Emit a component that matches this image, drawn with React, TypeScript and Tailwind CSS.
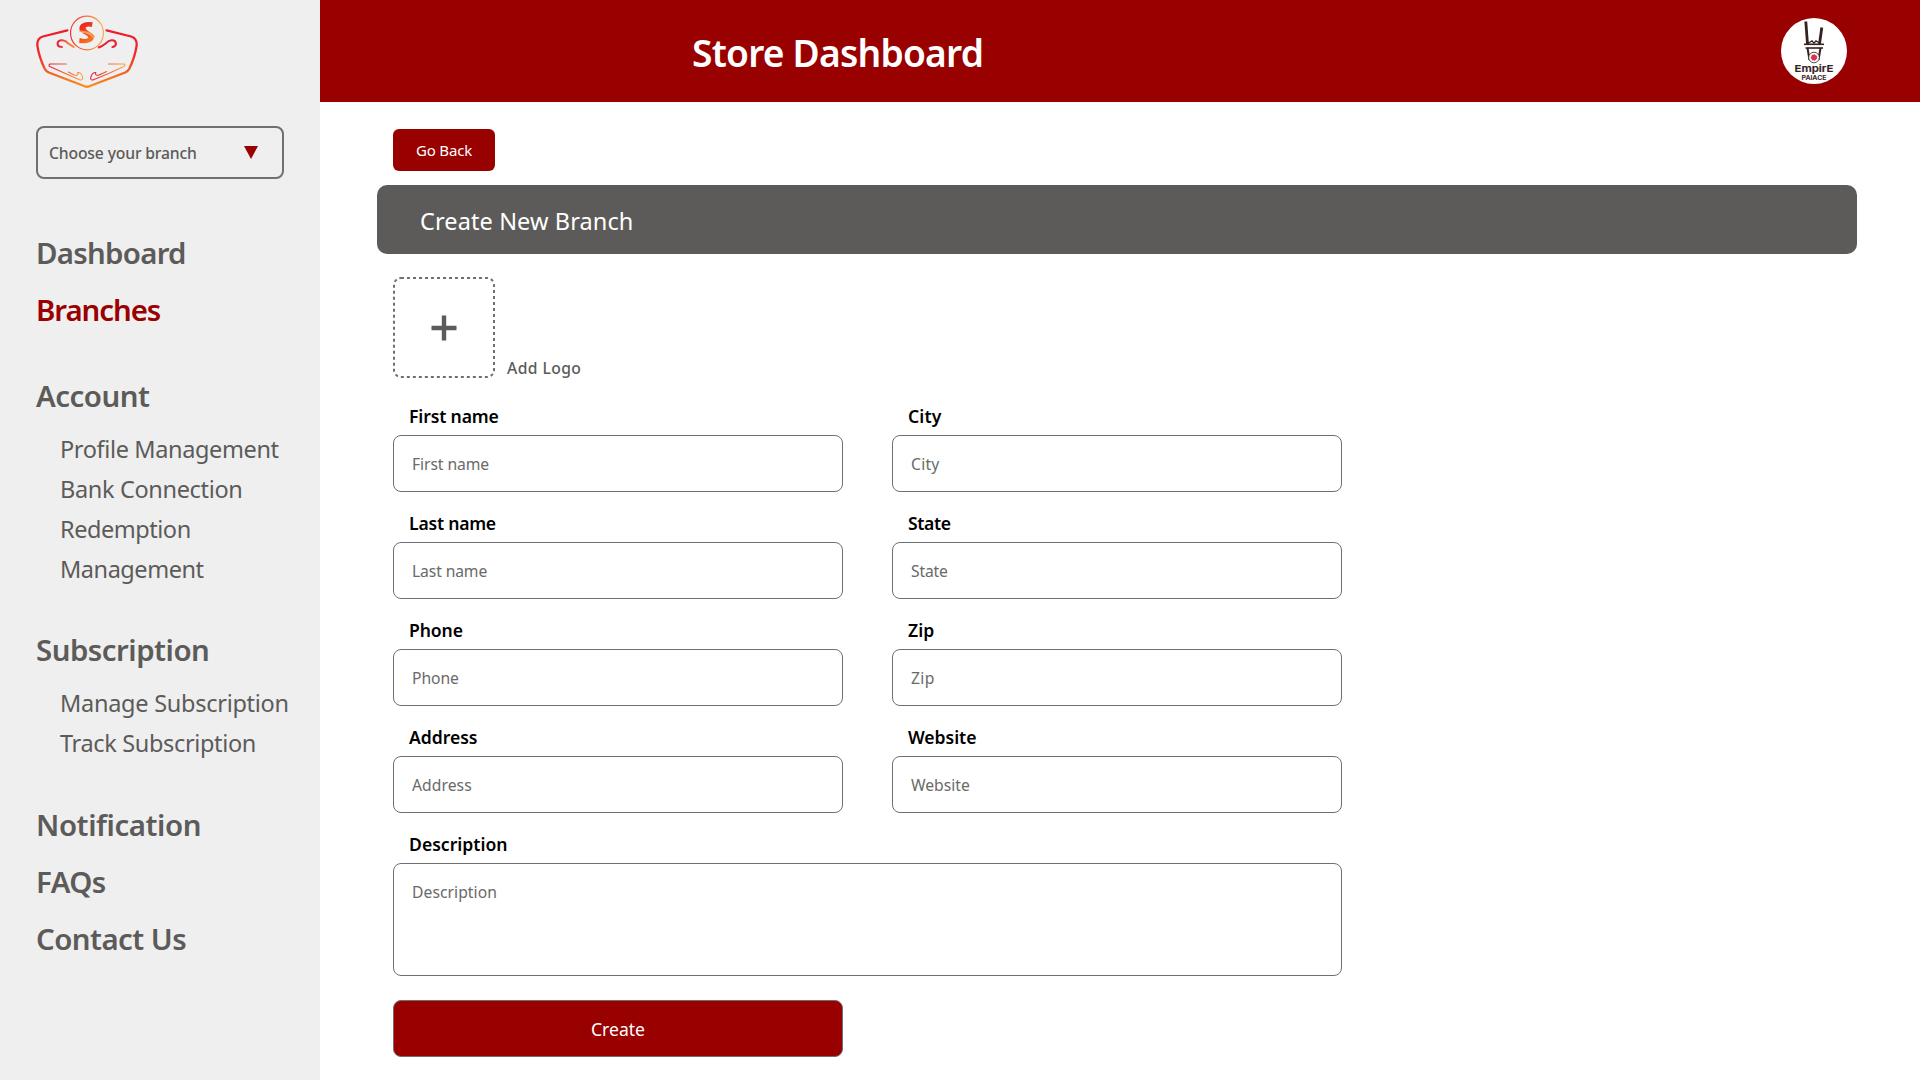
import { ReactNode } from "react";

function BrandLogo() {
  return (
    <svg width="102" height="74" viewBox="0 0 104 74" preserveAspectRatio="none" fill="none" strokeLinecap="round" strokeLinejoin="round">
      <defs>
        <linearGradient id="shield" x1="0" y1="14" x2="0" y2="73" gradientUnits="userSpaceOnUse">
          <stop offset="0" stopColor="#ed1b2c" />
          <stop offset="0.45" stopColor="#ef2b2a" />
          <stop offset="1" stopColor="#f7921e" />
        </linearGradient>
        <linearGradient id="ring" x1="34" y1="0" x2="70" y2="0" gradientUnits="userSpaceOnUse">
          <stop offset="0" stopColor="#ef2b35" />
          <stop offset="0.6" stopColor="#f7803a" />
          <stop offset="1" stopColor="#fbaf45" />
        </linearGradient>
        <linearGradient id="letter" x1="46" y1="8" x2="58" y2="28" gradientUnits="userSpaceOnUse">
          <stop offset="0" stopColor="#e8211f" />
          <stop offset="0.6" stopColor="#f2551f" />
          <stop offset="1" stopColor="#f78a1e" />
        </linearGradient>
        <linearGradient id="curl" x1="22" y1="0" x2="40" y2="0" gradientUnits="userSpaceOnUse">
          <stop offset="0" stopColor="#e8203a" />
          <stop offset="1" stopColor="#fba63c" />
        </linearGradient>
        <linearGradient id="flourishLeft" x1="14" y1="0" x2="48" y2="0" gradientUnits="userSpaceOnUse">
          <stop offset="0" stopColor="#e8203a" />
          <stop offset="1" stopColor="#fba63c" />
        </linearGradient>
        <linearGradient id="flourishRight" x1="56" y1="0" x2="90" y2="0" gradientUnits="userSpaceOnUse">
          <stop offset="0" stopColor="#e8203a" />
          <stop offset="1" stopColor="#fba63c" />
        </linearGradient>
      </defs>
      <path d="M32 15.300 L7 21.500 Q1 23.500 1.300 30 Q3 42 9 54 Q10 56 13 57.500 L49 71 Q52 72.500 55 71 L91 57.500 Q94 56 95 54 Q101 42 102.700 30 Q103 23.500 97 21.500 L72 15.300" stroke="url(#shield)" strokeWidth="2.300" />
      <circle cx="52" cy="18" r="16.800" stroke="url(#ring)" strokeWidth="1.200" />
      <path d="M57.800 7.200 L57 12 Q51 10.500 50.500 13 Q51 15 54.500 17 Q60 20 58.500 24.500 Q56 29 44 28 L44.500 23 Q52 25 53.500 22.500 Q53 20.500 49 19 Q43 16.500 44.500 11.500 Q47 6 57.800 7.200 Z" fill="url(#letter)" />
      <path d="M44.300 16 Q50 16 54 17.800 Q58.500 19 59.500 22" stroke="#f9a04a" strokeWidth="1.200" />
      <path d="M45 17.300 Q50 17 54 19 Q57 20 57.500 22" stroke="#fdebd8" strokeWidth="0.600" />
      <path d="M26.500 32 Q22 32 22 28.500 Q22.500 25 27 25.300 Q30 25.600 33 28.500 Q36 30.500 38.500 32" stroke="url(#curl)" strokeWidth="2.100" />
      <path d="M78 32 Q81.500 31.500 81.500 28.500 Q81 25 77 25.300 Q74 25.600 71 28.500 Q68 31 64 32.500" stroke="#e8203a" strokeWidth="2.100" />
      <path d="M31 49 H14 Q12.500 50.500 14 51.500 L30 58.500 L45 65 Q48 65.500 47.500 62 Q46 57 42.500 57.500 Q43.500 60 41 60.500 Q37 59.500 33 57" stroke="url(#flourishLeft)" strokeWidth="1.100" />
      <path d="M74 49 H90 Q91.500 50.500 89.500 51.500 L74 58.500 L58 65 Q55 65.500 56 62 Q57.500 57 61 57.500 Q60 60 62.500 60.500 Q66 59.500 72 56.500" stroke="url(#flourishRight)" strokeWidth="1.100" />
    </svg>
  );
}

function StoreAvatar() {
  return (
    <svg width="66" height="66" viewBox="0 0 66 66" fill="none" stroke="#35211f">
      <circle cx="33" cy="33" r="33" fill="#fff" stroke="none" />
      <path d="M24.800 3.500 L26.500 26" strokeWidth="2.800" />
      <path d="M40.800 9.500 L38.500 26" strokeWidth="2.800" />
      <path d="M27 25.500 L31 22.800 L33 25.200 L35 22.800 L39 25.500" strokeWidth="1.300" />
      <path d="M23 26.300 H43" strokeWidth="1.600" />
      <path d="M24.500 30 H42" strokeWidth="1.600" />
      <path d="M26.500 30 L28.500 42 M39.500 30 L37.500 42" strokeWidth="2" />
      <circle cx="33" cy="39.500" r="5.300" fill="#fff" strokeWidth="0.800" />
      <circle cx="33" cy="39.500" r="2.800" fill="#d8344c" stroke="#c8304c" strokeWidth="1" strokeDasharray="1.500 1" />
      <g fill="#35211f" fontFamily="Inter, sans-serif">
        <text x="13.500" y="54" fontSize="9.600" fontWeight="600" strokeWidth="0.200" textLength="39" lengthAdjust="spacingAndGlyphs">EmpirE</text>
        <text x="20.500" y="61.500" fontSize="6.800" fontWeight="600" strokeWidth="0.100" textLength="25" lengthAdjust="spacingAndGlyphs">PAlACE</text>
      </g>
    </svg>
  );
}

function NavItem({ children, className }: { children: ReactNode; className: string }) {
  return <a className={`block h-[57px] text-[29.4px] leading-[59px] font-semibold whitespace-nowrap ${className}`}>{children}</a>;
}

function SubItem({ children, className }: { children: ReactNode; className: string }) {
  return <a className={`block text-[23.5px] leading-10 ${className}`}>{children}</a>;
}

type FieldProps = { name: string; labelClass: string; inputClass: string };

const inputStyle =
  "block w-full rounded-lg border border-[#707070] bg-white pl-[18px] text-[15.7px] placeholder:text-[#6a6a68] placeholder:opacity-100 outline-none";
const labelStyle = "block h-[33px] pl-4 text-[17.6px] leading-[29px] font-semibold text-black";

function Field({ name, labelClass, inputClass }: FieldProps) {
  return (
    <label className="block">
      <span className={`${labelStyle} ${labelClass}`}>{name}</span>
      <input className={`h-[57px] pt-px ${inputStyle} ${inputClass}`} placeholder={name} />
    </label>
  );
}

const fields: FieldProps[] = [
  { name: "First name", labelClass: "tracking-[-0.15px]", inputClass: "tracking-[-0.08px]" },
  { name: "City", labelClass: "tracking-[0.1px]", inputClass: "tracking-[0.23px]" },
  { name: "Last name", labelClass: "tracking-[-0.23px]", inputClass: "tracking-[-0.13px]" },
  { name: "State", labelClass: "tracking-[-0.4px]", inputClass: "tracking-[-0.2px]" },
  { name: "Phone", labelClass: "tracking-[-0.1px]", inputClass: "tracking-[-0.1px]" },
  { name: "Zip", labelClass: "tracking-[0.08px]", inputClass: "tracking-[0.4px]" },
  { name: "Address", labelClass: "tracking-[-0.05px]", inputClass: "tracking-[0.05px]" },
  { name: "Website", labelClass: "tracking-[-0.05px]", inputClass: "tracking-[0px]" },
];

export default function App() {
  return (
    <div className="flex h-[1080px] w-[1920px] overflow-hidden bg-white font-['Noto_Sans',sans-serif] text-[#5c5b59]">
      <aside className="w-80 shrink-0 bg-[#efefef] pt-[15px] pl-9">
        <BrandLogo />
        <button className="mt-[37px] flex h-[53px] w-[248px] items-center justify-between rounded-lg border-2 border-[#707070] pr-6 pl-[11px]">
          <span className="pt-0.5 text-[15.7px] font-medium tracking-[-0.15px]">Choose your branch</span>
          <svg width="14" height="13" viewBox="0 0 14 13">
            <path d="M0 0 H14 L7 13 Z" fill="#990000" />
          </svg>
        </button>
        <nav className="mt-[45px]">
          <NavItem className="tracking-[-0.72px]">Dashboard</NavItem>
          <NavItem className="tracking-[-1.05px] text-[#990000]">Branches</NavItem>
          <div className="mt-[29px]">
            <NavItem className="tracking-[-0.5px]">Account</NavItem>
            <div className="mt-[5px] pl-6">
              <SubItem className="tracking-[-0.37px]">Profile Management</SubItem>
              <SubItem className="tracking-[-0.34px]">Bank Connection</SubItem>
              <SubItem className="tracking-[-0.46px]">Redemption Management</SubItem>
            </div>
          </div>
          <div className="mt-8">
            <NavItem className="tracking-[-0.49px]">Subscription</NavItem>
            <div className="mt-[5px] pl-6">
              <SubItem className="tracking-[-0.27px]">Manage Subscription</SubItem>
              <SubItem className="tracking-[-0.34px]">Track Subscription</SubItem>
            </div>
          </div>
          <div className="mt-[33px]">
            <NavItem className="tracking-[-0.41px]">Notification</NavItem>
            <NavItem className="tracking-[-0.55px]">FAQs</NavItem>
            <NavItem className="tracking-[-0.54px]">Contact Us</NavItem>
          </div>
        </nav>
      </aside>

      <div className="flex-1">
        <header className="flex h-[102px] items-center justify-between bg-[#990000] pr-[73px] pl-[372px]">
          <h1 className="pt-1 text-[37.2px] leading-[50px] font-semibold tracking-[-0.79px] text-white">Store Dashboard</h1>
          <StoreAvatar />
        </header>

        <main className="pt-[27px] pl-[57px]">
          <button className="ml-4 block h-[42px] w-[102px] rounded-md bg-[#990000] text-[15px] tracking-[-0.15px] text-white">
            Go Back
          </button>
          <h2 className="mt-[14px] h-[69px] w-[1480px] rounded-[10px] bg-[#5c5b59] pl-[43px] text-[23.5px] leading-[73px] tracking-[0.11px] text-white">
            Create New Branch
          </h2>

          <form className="mt-[23px] ml-4 w-[949px]">
            <div className="flex items-end gap-3">
              <svg width="102" height="101" viewBox="0 0 102 101" fill="none">
                <rect x="1" y="1" width="100" height="99" rx="7" stroke="#707070" strokeWidth="2" strokeDasharray="3 3" />
                <path d="M51 38.500 V63.500 M38.500 51 H63.500" stroke="#5c5b59" strokeWidth="4.400" />
              </svg>
              <span className="text-[15.7px] leading-5 font-medium tracking-[0.41px]">Add Logo</span>
            </div>

            <div className="mt-6 grid grid-cols-[450px_450px] gap-x-[49px] gap-y-[17px]">
              {fields.map((field) => (
                <Field key={field.name} {...field} />
              ))}
              <label className="col-span-2 block">
                <span className={`${labelStyle} tracking-[0px]`}>Description</span>
                <textarea
                  className={`h-[113px] resize-none pt-4 leading-[25px] tracking-[0.05px] ${inputStyle}`}
                  placeholder="Description"
                />
              </label>
            </div>
            <button className="mt-6 block h-[57px] w-[450px] rounded-lg border border-[#707070] bg-[#990000] pt-0.5 text-[17.6px] text-white">
              Create
            </button>
          </form>
        </main>
      </div>
    </div>
  );
}
